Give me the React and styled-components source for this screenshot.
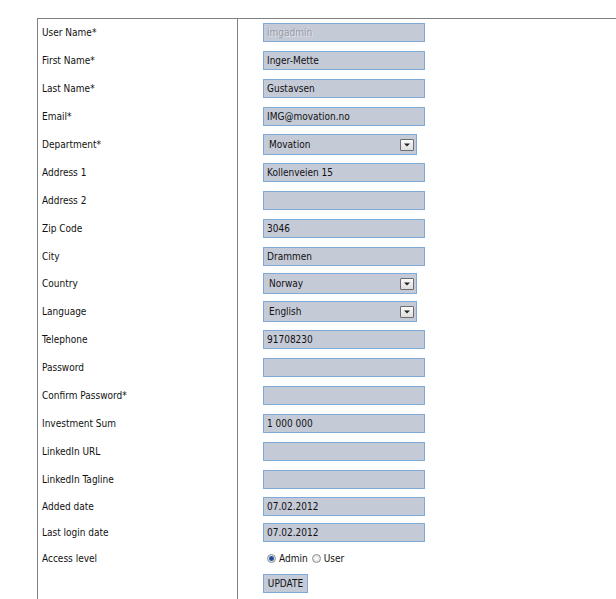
import React from 'react';
import styled, { createGlobalStyle } from 'styled-components';

const GlobalStyle = createGlobalStyle`
  html, body {
    margin: 0;
    padding: 0;
    background: #ffffff;
  }
  body {
    font-family: "DejaVu Sans Condensed", "DejaVu Sans", sans-serif;
    font-size: 10px;
    color: #111111;
    overflow: hidden;
  }
`;

const Page = styled.div`
  width: 616px;
  height: 599px;
  overflow: hidden;
`;

const Sheet = styled.div`
  margin: 18px 0 0 37px;
  width: 640px;
  border-top: 1px solid #808080;
  border-left: 1px solid #808080;
`;

const Row = styled.div`
  display: grid;
  grid-template-columns: 200px 1fr;
  height: ${(p) => p.$h}px;
`;

const Label = styled.div`
  display: flex;
  align-items: center;
  padding-left: 4px;
  border-right: 1px solid #808080;
  font-size: 10px;
  color: #111111;
`;

const Field = styled.div`
  display: flex;
  align-items: ${(p) => (p.$top ? 'flex-start' : 'center')};
  padding: ${(p) => (p.$top ? '3px' : '0')} 0 0 25px;
`;

const TextInput = styled.input`
  box-sizing: border-box;
  width: 162px;
  height: 19px;
  margin: 0;
  padding: 0 3px;
  border: 1px solid #7fa9d8;
  background: #c5cad7;
  font-family: inherit;
  font-size: 10px;
  color: ${(p) => (p.$muted ? '#979ba6' : '#111111')};
  text-shadow: ${(p) => (p.$muted ? '1px 1px 0 #e2e5eb' : 'none')};
  outline: none;
`;

const Select = styled.div`
  box-sizing: border-box;
  width: 154px;
  height: 21px;
  display: flex;
  align-items: center;
  justify-content: space-between;
  padding: 0 2px 0 5px;
  border: 1px solid #7fa9d8;
  background: #c5cad7;
  font-size: 10px;
  color: #111111;
`;

const ArrowBox = styled.span`
  box-sizing: border-box;
  width: 14px;
  height: 12px;
  display: flex;
  align-items: center;
  justify-content: center;
  border: 1px solid #6d6d6d;
  border-radius: 1px;
  background: linear-gradient(#fbfbfb, #dedede);
`;

const Radios = styled.div`
  display: flex;
  align-items: center;
  padding-left: 4px;
  font-size: 10px;
  color: #111111;
`;

const RadioDot = styled.span`
  box-sizing: border-box;
  width: 9px;
  height: 9px;
  margin-right: 3px;
  border-radius: 50%;
  border: 1px solid #8e8f8f;
  background: ${(p) =>
    p.$on
      ? 'radial-gradient(circle, #1b3d7a 0, #2a5aa8 2px, #dfe6ef 3px, #f4f4f4 4px)'
      : 'radial-gradient(circle, #ffffff 0, #dcdcdc 4px)'};
`;

const RadioLabel = styled.span`
  margin-right: 4px;
`;

const Button = styled.button`
  box-sizing: border-box;
  width: 45px;
  height: 19px;
  margin: 0;
  padding: 0;
  border: 1px solid #7fa9d8;
  background: #c5cad7;
  font-family: inherit;
  font-size: 10px;
  color: #111111;
`;

const fields = [
  { label: 'User Name*', value: 'imgadmin', muted: true },
  { label: 'First Name*', value: 'Inger-Mette' },
  { label: 'Last Name*', value: 'Gustavsen' },
  { label: 'Email*', value: 'IMG@movation.no' },
  { label: 'Department*', value: 'Movation', select: true },
  { label: 'Address 1', value: 'Kollenveien 15' },
  { label: 'Address 2', value: '' },
  { label: 'Zip Code', value: '3046' },
  { label: 'City', value: 'Drammen' },
  { label: 'Country', value: 'Norway', select: true },
  { label: 'Language', value: 'English', select: true },
  { label: 'Telephone', value: '91708230' },
  { label: 'Password', value: '' },
  { label: 'Confirm Password*', value: '' },
  { label: 'Investment Sum', value: '1 000 000' },
  { label: 'LinkedIn URL', value: '' },
  { label: 'LinkedIn Tagline', value: '' },
  { label: 'Added date', value: '07.02.2012', h: 26 },
  { label: 'Last login date', value: '07.02.2012', h: 26 },
];

function Arrow() {
  return (
    <svg width="6" height="4" viewBox="0 0 6 4">
      <path d="M0 0.5h6L3 3.5z" fill="#222" />
    </svg>
  );
}

export default function App() {
  return (
    <Page>
      <GlobalStyle />
      <Sheet>
        {fields.map((f) => (
          <Row key={f.label} $h={f.h || 27.9}>
            <Label>{f.label}</Label>
            <Field>
              {f.select ? (
                <Select>
                  <span>{f.value}</span>
                  <ArrowBox>
                    <Arrow />
                  </ArrowBox>
                </Select>
              ) : (
                <TextInput defaultValue={f.value} $muted={f.muted} readOnly />
              )}
            </Field>
          </Row>
        ))}
        <Row $h={26}>
          <Label>Access level</Label>
          <Field>
            <Radios>
              <RadioDot $on />
              <RadioLabel>Admin</RadioLabel>
              <RadioDot />
              <RadioLabel>User</RadioLabel>
            </Radios>
          </Field>
        </Row>
        <Row $h={40}>
          <Label />
          <Field $top>
            <Button>UPDATE</Button>
          </Field>
        </Row>
      </Sheet>
    </Page>
  );
}
